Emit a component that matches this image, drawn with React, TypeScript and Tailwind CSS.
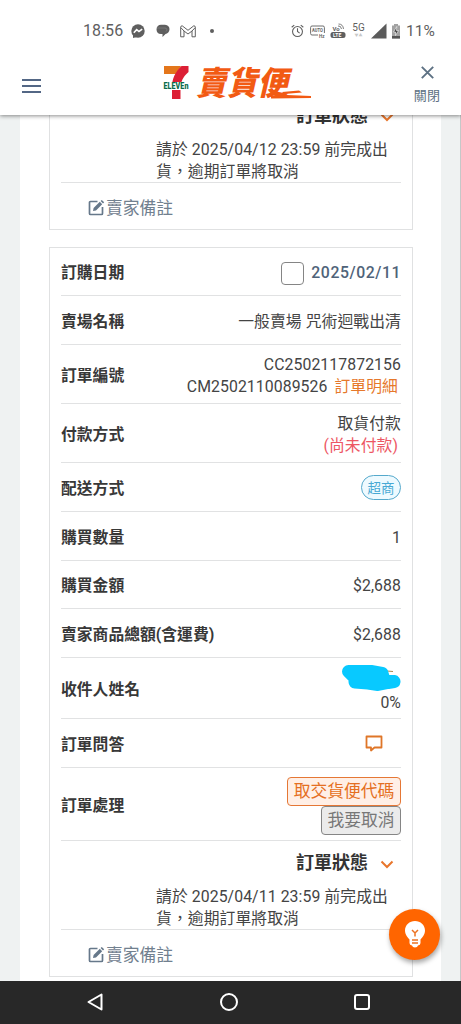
import type { ReactNode } from "react";
import { clsx } from "clsx";

function Logo() {
  return (
    <svg width="152" height="38" viewBox="0 0 152 38" className="overflow-visible">
      {/* 7-ELEVEN mark */}
      <path d="M1 0H18L13 8H1Z" fill="#e4761b" />
      <path d="M18.500 0H25.500V6C19.500 11 18 16 17.500 21H9C9 13 12 6 18.500 0Z" fill="#dc1f35" />
      <path d="M9 24H17.500V33H9Z" fill="#dc1f35" />
      <path d="M.5 16H26V24H.5Z" fill="#fff" />
      <text
        x="0.500"
        y="23"
        textLength="25"
        lengthAdjust="spacingAndGlyphs"
        fill="#0b6b4b"
        className="text-[8.500px] font-black font-['Roboto','Liberation_Sans',sans-serif]"
      >
        ELEVEn
      </text>
      <g transform="translate(33 29) skewX(-13)">
        <text
          x="0"
          y="0"
          textLength="92"
          lengthAdjust="spacingAndGlyphs"
          fill="#f25a13"
          className="text-[33px] font-black font-['Noto_Sans_CJK_TC',sans-serif]"
        >
          賣貨便
        </text>
      </g>
      <path d="M119 26L136 24.500L139 26.500L121 28ZM108 29.500L124 29L148 30V32L108 32.500Z" fill="#f25a13" />
    </svg>
  );
}

function StatusBar() {
  return (
    <div className="flex h-[62px] items-center pl-[83px] pr-[26px] text-[#5f5f5f]">
      <span className="w-[40px] whitespace-nowrap text-[16px] leading-none">18:56</span>
      <svg width="14" height="14" viewBox="0 0 14 14" className="ml-[8px]">
        <circle cx="7" cy="7" r="6.700" fill="currentColor" />
        <path d="M2 14V10L6 13Z" fill="currentColor" />
        <path d="M2.800 8.800L5.700 5.600L8 7.500L11.200 5.200" fill="none" stroke="#fff" strokeWidth="1.600" />
      </svg>
      <svg width="14" height="14" viewBox="0 0 14 14" className="ml-[11px]">
        <path d="M5 .8H9C12 .8 13.500 3 13.500 5.200C13.500 8 11.500 9.500 9.500 10L6.500 13V10H5C2 10 .5 8 .5 5.400C.5 2.500 2.500 .8 5 .8Z" fill="currentColor" />
        <path d="M1 4H9C11 4 11.500 6 10 7.500" fill="none" stroke="#8c8c8c" strokeWidth=".6" />
      </svg>
      <svg width="16" height="13" viewBox="0 0 16 13" fill="none" stroke="currentColor" strokeWidth="1" className="ml-[10px]">
        <path d="M.7 11.800V2.200Q.7 .8 2.200 .8L8 5.300L13.800 .8Q15.300 .8 15.300 2.200V11.800H12V6L8 9L4 6V11.800Z" />
        <path d="M4 6L.9 2.700M12 6L15.100 2.700" />
      </svg>
      <span className="ml-[14px] size-1 rounded-full bg-[#5f5f5f]" />
      <svg width="13" height="14" viewBox="0 0 12 13" fill="none" stroke="currentColor" strokeWidth="1" className="ml-auto">
        <circle cx="6" cy="7" r="4.600" />
        <path d="M6 4V7L8 8.500M.6 3L3 1M11.400 3L9 1" />
      </svg>
      <svg width="15" height="13" viewBox="0 0 15 13" className="ml-[6px]">
        <path d="M8 10H2Q.6 10 .6 8.500V2.500Q.6 1 2 1H13Q14.400 1 14.400 2.500V8" fill="none" stroke="currentColor" strokeWidth=".9" />
        <text x="2" y="7.300" textLength="11" lengthAdjust="spacingAndGlyphs" fill="currentColor" className="text-[5px] font-bold">AUTO</text>
        <text x="9" y="12.500" fill="currentColor" className="text-[4.500px] font-bold">Hz</text>
      </svg>
      <svg width="16" height="16" viewBox="0 0 16 16" className="ml-[5px]">
        <text x="2.500" y="7.500" fill="currentColor" className="text-[6px] font-bold">Vo</text>
        <path d="M8 3Q11 2.500 11.500 6M8.500 1Q13 1 13.500 6" fill="none" stroke="currentColor" strokeWidth=".8" />
        <rect x=".5" y="9" width="15" height="6" rx="2.500" fill="currentColor" />
        <text x="3" y="14" fill="#fff" className="text-[5px] font-bold">LTE</text>
      </svg>
      <div className="ml-[6px] flex h-[18px] w-[13px] flex-col items-center">
        <span className="text-[10px] leading-[12px]">5G</span>
        <span className="text-[4px] leading-[4px] text-[#c8c8c8]">▼▲</span>
      </div>
      <svg width="16" height="16" viewBox="0 0 16 16" className="ml-[6px]">
        <path d="M0 15.500L15.500 .5V15.500Z" fill="#5b5b5b" />
      </svg>
      <svg width="10" height="15" viewBox="0 0 10 15" className="ml-[4px]">
        <path d="M3 0H7V1.500H9V14.500H1V1.500H3Z" fill="#a2a2a2" />
        <path d="M1 12H9V14.500H1Z" fill="#555" />
        <path d="M5.800 2.500L2.500 8H4.500V11.500L7.500 6.500H5.500Z" fill="#444" stroke="#fff" strokeWidth=".6" />
      </svg>
      <span className="ml-[5px] w-[29px] whitespace-nowrap pt-px text-[15.500px] leading-none">11%</span>
    </div>
  );
}

function Header() {
  return (
    <header className="relative z-10 h-[115px] shrink-0 bg-white shadow-[0_1px_4px_rgba(0,0,0,0.45)]">
      <StatusBar />
      <div className="flex items-start pl-[22px] pr-[20px]">
        <div className="mt-[17px] flex w-[19px] flex-col gap-[4px]">
          <span className="h-[2px] bg-[#536785]" />
          <span className="h-[2px] bg-[#536785]" />
          <span className="h-[2px] bg-[#536785]" />
        </div>
        <div className="ml-[122px] mt-[4px]">
          <Logo />
        </div>
        <div className="ml-auto mt-[4px] flex flex-col items-center text-[#5d7183]">
          <svg width="13" height="13" viewBox="0 0 13 13" stroke="currentColor" strokeWidth="1.900">
            <path d="M.8 .8L12.200 12.200M12.200 .8L.8 12.200" />
          </svg>
          <span className="mr-px mt-[8px] text-[13px] leading-[18px]">關閉</span>
        </div>
      </div>
    </header>
  );
}

interface RowProps {
  label: string;
  height: string;
  children: ReactNode;
}

function Row({ label, height, children }: RowProps) {
  return (
    <div className={clsx("flex items-center justify-between border-b border-[#e1e2e3] pt-[3px]", height)}>
      <span className="font-bold tracking-normal text-[#383838]">{label}</span>
      <div className="text-right">{children}</div>
    </div>
  );
}

function StatusBlock({ date }: { date: string }) {
  return (
    <div className="h-[89px] border-b border-[#e1e2e3]">
      <div className="flex h-[44px] items-center justify-end pr-[7px]">
        <span className="text-[18px] font-bold tracking-normal text-[#333]">訂單狀態</span>
        <svg width="14" height="9" viewBox="0 0 14 9" fill="none" stroke="#e8762c" strokeWidth="2" className="ml-[12px] mt-[2px]">
          <path d="M1.500 1.500L7 7L12.500 1.500" />
        </svg>
      </div>
      <p className="pl-[95px] pt-px leading-[22px]">
        請於 {date} 23:59 前完成出
        <br />
        貨，逾期訂單將取消
      </p>
    </div>
  );
}

function SellerNote() {
  return (
    <div className="flex h-[46px] items-center pb-px pl-[27px] pt-[4px] text-[16.800px] tracking-normal text-[#71808f]">
      <svg width="17" height="17" viewBox="0 0 17 17" className="mr-px">
        <path d="M9.500 2.500H2.500Q1.500 2.500 1.500 3.500V14.500Q1.500 15.500 2.500 15.500H13.500Q14.500 15.500 14.500 14.500V8" fill="none" stroke="#66788a" strokeWidth="1.700" />
        <path d="M5 12L5.600 9L11.800 2.800L14.200 5.200L8 11.400ZM12.600 2L13.800 .9L16.200 3.200L15 4.400Z" fill="#66788a" />
      </svg>
      <span>賣家備註</span>
    </div>
  );
}

function OrderCard() {
  return (
    <section className="mt-[17px] border border-[#e0e1e2] px-[11px]">
      <Row label="訂購日期" height="h-[48px]">
        <div className="flex items-center gap-[7px]">
          <span className="size-[23px] rounded-[4px] border border-[#858585]" />
          <span className="font-medium tracking-[0.550px] text-[#4f6379]">2025/02/11</span>
        </div>
      </Row>
      <Row label="賣場名稱" height="h-[49px]">一般賣場 咒術迴戰出清</Row>
      <Row label="訂單編號" height="h-[59px]">
        <p>CC2502117872156</p>
        <p>
          CM2502110089526
          <span className="ml-[7px] mr-[3px] text-[#e6782b]">訂單明細</span>
        </p>
      </Row>
      <Row label="付款方式" height="h-[59px]">
        <p>取貨付款</p>
        <p className="mr-[3px] text-[#ed5764]">(尚未付款)</p>
      </Row>
      <Row label="配送方式" height="h-[49px]">
        <span className="mb-[2px] flex h-[25px] w-[40px] items-center justify-center rounded-full border border-[#55a9cc] bg-[#eefaff] text-[13.500px] text-[#48a9d4]">
          超商
        </span>
      </Row>
      <Row label="購買數量" height="h-[49px]">1</Row>
      <Row label="購買金額" height="h-[48px]">$2,688</Row>
      <Row label="賣家商品總額(含運費)" height="h-[49px]">$2,688</Row>
      <Row label="收件人姓名" height="h-[61px]">
        <svg width="60" height="28" viewBox="0 0 60 28" className="-mt-[2px]">
          {/* marker scribble over the recipient's name */}
          <path d="M46 7L52 7.500" stroke="#a9894e" />
          <path
            d="M7.500 7.500H14L30 7.500L41 9.500L43 16L53 17.500L47 18.500L37 20.500L27 19L14 18L14 14Z"
            fill="#08c9ff"
            stroke="#08c9ff"
            strokeWidth="13"
            strokeLinejoin="round"
          />
        </svg>
        <p className="leading-[21px]">0%</p>
      </Row>
      <Row label="訂單問答" height="h-[49px]">
        <svg width="18" height="17" viewBox="0 0 18 17" fill="none" stroke="#df7628" strokeWidth="1.800" strokeLinejoin="round" className="mb-[3px] mr-[18px]">
          <path d="M1.500 1.500H16.500V12.500H9.500L6 15.500V12.500H1.500Z" />
        </svg>
      </Row>
      <Row label="訂單處理" height="h-[73px]">
        <div className="flex flex-col items-end text-[16.800px] leading-none tracking-normal">
          <button className="h-[29px] w-[114px] whitespace-nowrap rounded-[4px] border border-[#e57735] bg-[#ffefe6] text-[#e56f22]">
            取交貨便代碼
          </button>
          <button className="h-[29px] w-[80px] whitespace-nowrap rounded-[4px] border border-[#858585] bg-[#ebebeb] text-[#777]">
            我要取消
          </button>
        </div>
      </Row>
      <StatusBlock date="2025/04/11" />
      <SellerNote />
    </section>
  );
}

function TipButton() {
  return (
    <button className="absolute left-[389px] top-[909px] z-20 flex size-[51px] items-center justify-center rounded-full bg-[#ff6500] shadow-[1px_3px_5px_rgba(0,0,0,0.35)]">
      <svg width="20" height="27" viewBox="0 0 20 27">
        <path d="M10 0C4.500 0 0 4 0 9.500C0 14 3 16.500 4.500 18.500V22Q4.500 24 7 24.500Q7.500 26.500 10 26.500Q12.500 26.500 13 24.500Q15.500 24 15.500 22V18.500C17 16.500 20 14 20 9.500C20 4 15.500 0 10 0Z" fill="#fff" />
        <path d="M7 9L10 12L13 9M10 12V15.500M7 19H13M7 22H13" fill="none" stroke="#ed7322" strokeWidth="1.500" />
      </svg>
    </button>
  );
}

function NavBar() {
  return (
    <nav className="z-10 flex h-[43px] shrink-0 items-center bg-[#282828] pl-[87px]">
      <svg width="17" height="18" viewBox="0 0 17 18" fill="none" stroke="#fff" strokeWidth="2" strokeLinejoin="round" className="mb-[2px]">
        <path d="M14.500 1.500V16.500L1.500 9Z" />
      </svg>
      <span className="mb-[2px] ml-[116px] size-[18px] rounded-full border-[2.500px] border-white" />
      <span className="mb-[2px] ml-[116px] size-[16px] rounded-[3px] border-[2.500px] border-white" />
    </nav>
  );
}

export default function App() {
  return (
    <div className="relative flex h-[1024px] w-[461px] flex-col overflow-hidden bg-[#eff2f2] font-['Roboto','Noto_Sans_CJK_TC',sans-serif] text-[15.800px] leading-[22px] tracking-[0.080px] text-[#444]">
      <Header />
      <main className="min-h-0 flex-1 border-r border-[#c5c8c8] pl-[20px] pr-[19px]">
        <div className="-mt-[21px] box-content h-full bg-white pb-[21px] pl-[29px] pr-[28px]">
          {/* previous order, scrolled under the header */}
          <section className="h-[136px] border-x border-b border-[#e0e1e2] px-[11px]">
            <StatusBlock date="2025/04/12" />
            <SellerNote />
          </section>
          <OrderCard />
        </div>
      </main>
      <TipButton />
      <NavBar />
    </div>
  );
}
